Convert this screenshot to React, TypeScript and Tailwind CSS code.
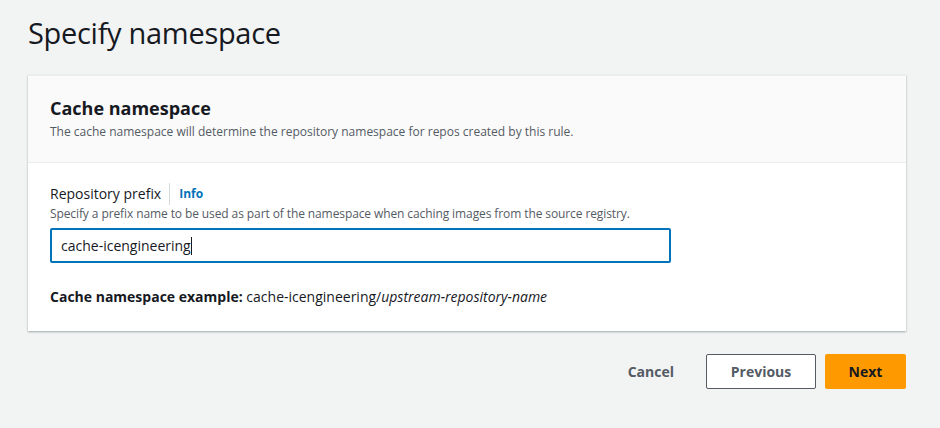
export default function App() {
  return (
    <div className="w-[940px] h-[428px] bg-[#f2f3f3] px-7 pt-[14px] text-[#16191f]" style={{ fontFamily: "'Open Sans', 'Liberation Sans', sans-serif" }}>
      <h1 className="text-[29px] leading-[38px] font-normal tracking-[-0.3px]">Specify namespace</h1>
      <div className="mt-[23px] w-[878px] bg-white shadow-[0_1px_2px_rgba(0,28,36,0.35)] border-t border-[#eaeded]">
        <div className="bg-[#fafafa] border-b border-[#eaeded] px-[22px] pt-[20px] pb-[21px]">
          <div className="text-[18px] leading-[24px] font-bold">Cache namespace</div>
          <div className="text-[12px] leading-[18px] text-[#545b64] mt-[3px]">
            The cache namespace will determine the repository namespace for repos created by this rule.
          </div>
        </div>
        <div className="px-[22px] pt-[20px] pb-[24px]">
          <div className="flex items-center text-[14px] leading-[22px]">
            <span>Repository prefix</span>
            <span className="ml-[8px] h-[22px] border-l border-[#d5dbdb]" />
            <span className="ml-[9px] text-[12px] font-bold text-[#0073bb]">Info</span>
          </div>
          <div className="text-[12px] leading-[16px] text-[#545b64] mt-[1px] tracking-[-0.1px]">
            Specify a prefix name to be used as part of the namespace when caching images from the source registry.
          </div>
          <div className="mt-[6px] w-[621px] h-[35px] border-2 border-[#0073bb] rounded-[2px] flex items-center px-[9px] text-[14px]">
            cache-icengineering<span className="w-px h-[18px] bg-[#16191f]" />
          </div>
          <div className="mt-[24px] text-[14px] leading-[20px]">
            <span className="font-bold">Cache namespace example:</span> cache-icengineering/<i>upstream-repository-name</i>
          </div>
        </div>
      </div>
      <div className="w-[878px] flex justify-end items-center mt-[23px] text-[14px] font-bold">
        <span className="mr-[32px] text-[#545b64]">Cancel</span>
        <button className="w-[110px] h-[35px] border border-[#545b64] bg-white rounded-[2px] text-[#545b64]">Previous</button>
        <button className="ml-[9px] w-[81px] h-[35px] bg-[#ff9900] rounded-[2px] text-[#16191f]">Next</button>
      </div>
    </div>
  );
}
